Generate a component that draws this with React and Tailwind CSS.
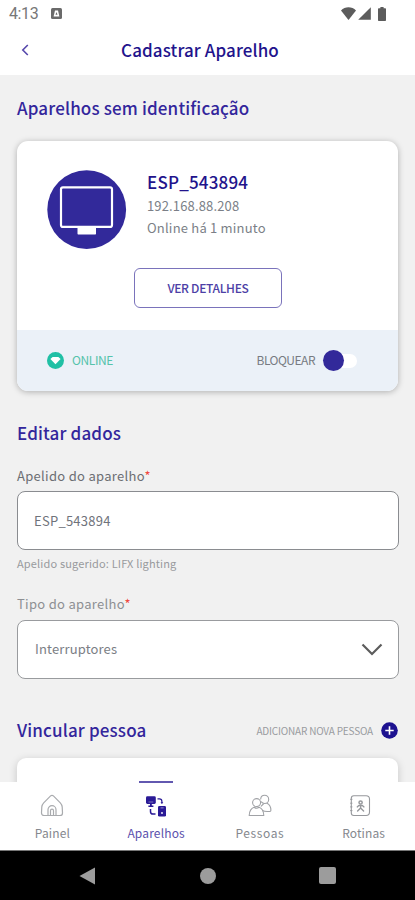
import { useState } from 'react'

const TABS = [
    { id: 'painel', label: 'Painel', icon: HomeIcon, spacing: 'tracking-[0.1px]' },
    { id: 'aparelhos', label: 'Aparelhos', icon: DevicesIcon, spacing: 'tracking-[0.15px]' },
    { id: 'pessoas', label: 'Pessoas', icon: PeopleIcon, spacing: 'tracking-[0.6px]' },
    { id: 'rotinas', label: 'Rotinas', icon: RoutinesIcon, spacing: 'tracking-[0.1px]' },
]

function HomeIcon() {
    return (
        <svg className="h-6 w-6" viewBox="0 0 24 24" fill="none" stroke="#a9abae" strokeWidth="1.2" strokeLinejoin="round">
            <path d="M12 1.3c.5 0 1 .2 1.4.6l6.9 7c1.1 1.2 1.7 2.4 1.9 4l.3 6c0 1.600-1 2.600-2.600 2.600H4.100c-1.600 0-2.600-1-2.600-2.600l.3-6c.2-1.600.8-2.800 1.900-4l6.900-7c.4-.4.900-.6 1.400-.6z" />
            <path d="M8 21.500v-5.800a4 4 0 0 1 8 0v5.800M10.500 21.500v-4.800a1.500 1.500 0 0 1 3 0v4.800" />
        </svg>
    )
}

function DevicesIcon() {
    return (
        <svg className="h-6 w-6" viewBox="0 0 24 24" fill="none">
            <rect x="2" y="2.300" width="9.800" height="7.700" rx="1.400" fill="#2a1a96" />
            <path d="M6 9.800h1.800v1.800h1.600v1.300h-5v-1.300H6z" fill="#2a1a96" />
            <path d="M4.500 8h4.800" stroke="#fff" strokeWidth=".4" />
            <rect x="14" y="11.900" width="8" height="10.700" rx="1.400" fill="#2a1a96" />
            <path d="M16.600 13.900h3" stroke="#fff" strokeWidth=".5" />
            <circle cx="18" cy="19" r=".9" fill="#fff" />
            <path d="M13.500 4.900h1.900c1.500 0 2.500 1 2.500 2.500v1.800" stroke="#2a1a96" strokeWidth="1.200" />
            <path d="M16.500 8.300h2.800l-1.400 1.700z" fill="#2a1a96" />
            <path d="M6.500 15v2.400c0 1.700 1 2.600 2.600 2.600h2.400" stroke="#2a1a96" strokeWidth="1.500" />
        </svg>
    )
}

function PeopleIcon() {
    return (
        <svg className="h-6 w-6" viewBox="0 0 24 24" fill="none" stroke="#a0a2a6" strokeWidth="1.1" strokeLinecap="round" strokeLinejoin="round">
            <circle cx="8.600" cy="8.600" r="4" />
            <path d="M1.200 21.500c.2-4.200 2-7.200 4.900-8.200 1.500 1.100 3.500 1.100 5 0 2.900 1 4.500 4 4.700 8.200z" />
            <path d="M12.700 5c.2-2.200 1.800-3.700 3.900-3.700 2.300 0 4.100 1.800 4.100 4.100s-1.800 4.100-4.100 4.100c-1.300 0-2.500-.6-3.200-1.600" />
            <path d="M13.200 12.200l2.200-2.200M19 9.300c2.400 1.200 3.900 3.900 3.900 7 0 .8-.3 1.200-1.100 1.200h-2.600c-2 0-3.500-.3-4.700-1" />
        </svg>
    )
}

function RoutinesIcon() {
    return (
        <svg className="mr-[7px] h-6 w-6" viewBox="0 0 24 24" fill="none" stroke="#96989c" strokeLinecap="round" strokeLinejoin="round">
            <path strokeWidth="1.1" d="M5.800 1.700h12.300c2 0 3.400 1.400 3.400 3.400v13c0 2-1.400 3.400-3.400 3.400H5.800c-1.500 0-2.500-1-2.500-2.500V4.200c0-1.500 1-2.500 2.500-2.500z" />
            <path strokeWidth="1" d="M2.600 5.300h1.400M2.600 9.200h1.400M2.600 12.900h1.400M2.600 16.600h1.400" />
            <circle cx="12.600" cy="8.500" r="1.600" strokeWidth="1.500" />
            <path strokeWidth="1.400" d="M9.300 12.900c.8-1.200 1.900-1.700 3.300-1.700s2.500.5 3.300 1.700M12.600 11.500v2.500M12.600 13.900l-3 3M12.600 13.900l3 3" />
        </svg>
    )
}

function StatusBar() {
    return (
        <div className="flex h-[27px] items-center justify-between pl-[9px] pr-[29px] font-['Roboto',sans-serif]">
            <div className="flex items-center gap-[13px]">
                <span className="text-[16px] leading-[27px] tracking-[-0.4px] text-[#777]">4:13</span>
                <svg className="h-[11px] w-[11px]" viewBox="0 0 11 11">
                    <rect width="11" height="11" rx="1.500" fill="#6a6a6a" />
                    <path d="M2.600 8.500 4 2.600h3l1.400 5.900z" fill="#fff" />
                    <path d="M4.500 6.800 5.500 4l1 2.800z" fill="#6a6a6a" />
                </svg>
            </div>
            <div className="flex items-center">
                <svg className="h-[13px] w-[15px]" viewBox="0 0 16 13" preserveAspectRatio="none">
                    <path d="M0 3.400C2.200 1.300 5 .2 8 .2s5.800 1.100 8 3.200L8 12.900z" fill="#5c5c5c" />
                </svg>
                <svg className="ml-[2px] h-[13px] w-[13px]" viewBox="0 0 13 13">
                    <path d="M12.800.2v12.600H.2z" fill="#5c5c5c" />
                </svg>
                <svg className="ml-[7px] h-[14px] w-[8px]" viewBox="0 0 8 14">
                    <path d="M2.400 0h3.200v1.300H7c.6 0 1 .4 1 1V13c0 .6-.4 1-1 1H1c-.6 0-1-.4-1-1V2.300c0-.6.4-1 1-1h1.400z" fill="#5c5c5c" />
                </svg>
            </div>
        </div>
    )
}

function Header() {
    return (
        <header className="relative flex h-12 justify-center pr-[15px] pt-[11px]">
            <button type="button" aria-label="Voltar" className="absolute left-[21px] top-[17px]">
                <svg className="h-[12px] w-[8px]" viewBox="0 0 8 12" fill="none" stroke="#5547ab" strokeWidth="1.600">
                    <path d="M6.800 1 1.800 6l5 5" />
                </svg>
            </button>
            <h1 className="text-[17px] font-medium leading-6 tracking-[0.1px] text-[#22138c]">Cadastrar Aparelho</h1>
        </header>
    )
}

function DeviceCard() {
    const [blocked, setBlocked] = useState(false)

    return (
        <section className="mt-[21px] h-[250px] overflow-hidden rounded-[11px] bg-white shadow-[0_1px_6px_rgba(0,0,0,0.28)]">
            <div className="flex h-[189px] flex-col">
                <div className="flex pl-[30px] pt-[29px]">
                    <svg className="h-[80px] w-[80px]" viewBox="0 0 80 80">
                        <circle cx="39.700" cy="39.700" r="39.400" fill="#32299a" />
                        <rect x="14" y="17.300" width="51" height="39.600" rx="2" fill="none" stroke="#fff" strokeWidth="2.200" />
                        <path d="M30.500 57H49v6.500c0 .6-.3 1-1 1H31.500c-.7 0-1-.4-1-1z" fill="#fff" />
                    </svg>
                    <div className="ml-[20px]">
                        <h3 className="text-[17px] font-medium leading-6 tracking-[0.2px] text-[#22138c]">ESP_543894</h3>
                        <p className="mt-px text-[13px] leading-[22px] tracking-[0.15px] text-[#7b7f87]">192.168.88.208</p>
                        <p className="text-[13px] leading-[22px] tracking-[0.2px] text-[#7b7f87]">Online há 1 minuto</p>
                    </div>
                </div>
                <button type="button" className="ml-[117px] mt-[18px] h-10 w-[148px] rounded-[6px] border border-[#7a73bb] pb-px text-[12px] font-medium leading-5 tracking-[-0.300px] text-[#4c40a6]">
                    VER DETALHES
                </button>
            </div>
            <div className="flex h-[61px] items-center justify-between bg-[#ebf1f8] pl-[30px] pr-[41px]">
                <div className="flex items-center">
                    <svg className="h-[17px] w-[17px]" viewBox="0 0 17 17">
                        <circle cx="8.500" cy="8.500" r="8.500" fill="#20c0a5" />
                        <path d="M3.400 6.900 5.600 4.900h5.800l2.200 2-5.100 5.400z" fill="#fff" />
                    </svg>
                    <span className="ml-[8px] pb-[2px] text-[12px] leading-5 tracking-[-0.400px] text-[#55c3ab]">ONLINE</span>
                </div>
                <div className="flex items-center">
                    <span className="pb-[2px] text-[12px] leading-5 tracking-[-0.500px] text-[#777b82]">BLOQUEAR</span>
                    <button
                        type="button"
                        role="switch"
                        aria-checked={blocked}
                        aria-label="Bloquear"
                        onClick={() => setBlocked(!blocked)}
                        className="ml-[8px] flex h-[22px] w-[34px] items-center"
                    >
                        <span className={`flex h-[14px] w-[34px] items-center rounded-full bg-white ${blocked ? 'justify-end' : ''}`}>
                            <span className="h-[21px] w-[21px] shrink-0 rounded-full bg-[#32299a]" />
                        </span>
                    </button>
                </div>
            </div>
        </section>
    )
}

function FieldLabel({ children, className }) {
    return (
        <label className={`block text-[13px] leading-5 tracking-[0.3px] ${className}`}>
            {children}
            <span className="text-[#f0483e]">*</span>
        </label>
    )
}

function TabBar({ active, onChange }) {
    return (
        <nav className="relative flex h-[68px] bg-white">
            {TABS.map(({ id, label, icon: Icon, spacing }) => (
                <button key={id} type="button" onClick={() => onChange(id)} className="relative flex flex-1 flex-col items-center pl-px pt-[12px]">
                    {active === id && <span className="absolute -top-[1px] h-[2px] w-[34px] bg-[#6258b0]" />}
                    <Icon />
                    <span className={`mt-[5px] text-[12px] leading-5 ${spacing} ${active === id ? 'text-[#5b50ad]' : 'text-[#85888e]'}`}>
                        {label}
                    </span>
                </button>
            ))}
        </nav>
    )
}

function SystemNav() {
    return (
        <div className="flex h-[50px] items-center border-t border-[#777] bg-black pl-[79px]">
            <svg className="h-[18px] w-[17px]" viewBox="0 0 17 18">
                <path d="M.5 9 16 .4v17.200z" fill="#9c9c9c" />
            </svg>
            <span className="ml-[104px] h-[16px] w-[16px] rounded-full bg-[#9c9c9c]" />
            <span className="ml-[103px] h-[17px] w-[17px] rounded-[2px] bg-[#9c9c9c]" />
        </div>
    )
}

export default function App() {
    const [tab, setTab] = useState('aparelhos')
    const [apelido, setApelido] = useState('ESP_543894')

    return (
        <div className="flex h-[900px] w-[415px] flex-col overflow-hidden bg-white font-['Noto_Sans_CJK_SC','Noto_Sans',sans-serif]">
            <StatusBar />
            <Header />

            <main className="min-h-0 flex-1 overflow-hidden bg-[#f1f1f1] px-[17px] pt-[21px]">
                <h2 className="text-[17px] font-medium leading-6 tracking-[0.150px] text-[#33269c]">Aparelhos sem identificação</h2>
                <DeviceCard />

                <h2 className="mt-[30px] text-[17px] font-medium leading-6 tracking-[0.150px] text-[#33269c]">Editar dados</h2>

                <FieldLabel className="mt-[21px] text-[#6c6e73]">Apelido do aparelho</FieldLabel>
                <input
                    value={apelido}
                    onChange={(e) => setApelido(e.target.value)}
                    className="mt-[5px] block h-[59px] w-[382px] rounded-[8px] border border-[#8a8c90] bg-white px-[16px] text-[13px] tracking-[0.250px] text-[#6f737b] outline-none"
                />
                <p className="mt-[3px] text-[11px] leading-5 tracking-[0.150px] text-[#989a9d]">Apelido sugerido: LIFX lighting</p>

                <FieldLabel className="mt-[21px] text-[#8d8f93]">Tipo do aparelho</FieldLabel>
                <button
                    type="button"
                    className="mt-[6px] flex h-[59px] w-[382px] items-center justify-between rounded-[8px] border border-[#999b9e] bg-white pl-[17px] pr-[15px] text-[13px] tracking-[0.150px] text-[#7b7e85]"
                >
                    <span className="pb-px">Interruptores</span>
                    <svg className="h-[13px] w-[22px]" viewBox="0 0 22 13" fill="none" stroke="#5c5c5c" strokeWidth="2.200">
                        <path d="m1.500 1.500 9.500 9.500 9.500-9.500" />
                    </svg>
                </button>

                <div className="mt-[39px] flex items-center justify-between">
                    <h2 className="text-[17px] font-medium leading-6 tracking-[0.150px] text-[#33269c]">Vincular pessoa</h2>
                    <button type="button" className="flex items-center text-[10px] tracking-[-0.180px] text-[#999b9f]">
                        ADICIONAR NOVA PESSOA
                        <svg className="ml-[8px] h-[17px] w-[17px]" viewBox="0 0 17 17">
                            <circle cx="8.500" cy="8.500" r="8.300" fill="#1d1290" />
                            <path d="M8.500 4.300v8.400M4.300 8.500h8.400" stroke="#fff" strokeWidth="1.600" />
                        </svg>
                    </button>
                </div>
                <div className="mt-[16px] h-[120px] rounded-[9px] bg-white shadow-[0_2px_8px_rgba(0,0,0,0.18)]" />
            </main>

            <TabBar active={tab} onChange={setTab} />
            <SystemNav />
        </div>
    )
}
